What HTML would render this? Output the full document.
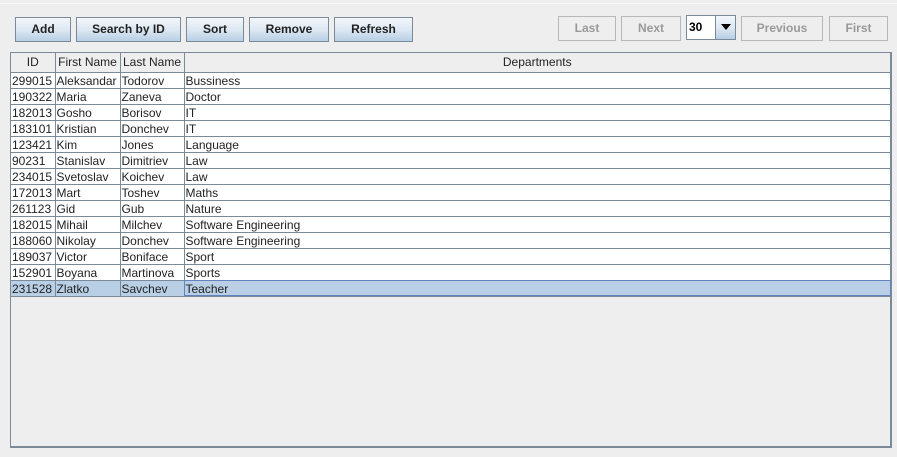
<!DOCTYPE html><html><head><style>
body{margin:0;width:897px;height:457px;background:#eeeeee;font-family:"Liberation Sans",sans-serif;position:relative;overflow:hidden}
.top{position:absolute;left:0;top:0;width:897px;height:3px;background:#eee;border-bottom:1px solid #fafafa}
.b{position:absolute;top:17px;height:25px;box-sizing:border-box;border:1px solid #7a8a99;background:linear-gradient(#f4f7fb,#dde8f3 50%,#b8cfe5);font-weight:bold;font-size:12px;color:#222;text-align:center;line-height:23px}
.d{top:16px;background:#eeeeee;border-color:#b8b8b8;color:#999}
.tbl{position:absolute;left:10px;top:52px;width:882px;height:396px;box-sizing:border-box;border:1px solid #7a8a99;border-right:2px solid #7a8a99;border-bottom:2px solid #7a8a99;background:#eee}
table{border-collapse:collapse;font-size:12px;color:#222;table-layout:fixed;width:880px}
th{font-weight:normal;height:19px;padding:0;border-right:1px solid #7a8a99;border-bottom:1px solid #7a8a99;background:#eee;box-sizing:border-box}
td{height:16px;padding:1px 0 0 1px;border:1px solid #7a8a99;border-top:0;background:#fff;white-space:nowrap;overflow:hidden;line-height:14px;box-sizing:border-box}
td:first-child{border-left:0}
tr.s td{background:#b8cfe5}
</style></head><body>
<div class="top"></div>
<div class="b" style="left:15px;width:56px">Add</div>
<div class="b" style="left:76px;width:105px">Search by ID</div>
<div class="b" style="left:186px;width:58px">Sort</div>
<div class="b" style="left:249px;width:80px">Remove</div>
<div class="b" style="left:334px;width:79px">Refresh</div>
<div class="b d" style="left:558px;width:58px">Last</div>
<div class="b d" style="left:621px;width:60px">Next</div>
<div style="position:absolute;left:686px;top:15px;width:30px;height:25px;box-sizing:border-box;border:1px solid #7a8a99;background:#fff;font-weight:bold;font-size:12px;line-height:22px;padding-left:2px">30</div>
<div class="b" style="left:715px;top:15px;width:21px;height:25px"><svg width="12" height="8" style="margin-top:7px;vertical-align:top"><path d="M1 1h10l-5 6z" fill="#000"/></svg></div>
<div class="b d" style="left:741px;width:82px">Previous</div>
<div class="b d" style="left:829px;width:59px">First</div>
<div class="tbl"><table>
<colgroup><col style="width:44px"><col style="width:65px"><col style="width:64px"><col></colgroup>
<tr><th>ID</th><th>First Name</th><th>Last Name</th><th>Departments</th></tr>
<tr><td>299015</td><td>Aleksandar</td><td>Todorov</td><td>Bussiness</td></tr>
<tr><td>190322</td><td>Maria</td><td>Zaneva</td><td>Doctor</td></tr>
<tr><td>182013</td><td>Gosho</td><td>Borisov</td><td>IT</td></tr>
<tr><td>183101</td><td>Kristian</td><td>Donchev</td><td>IT</td></tr>
<tr><td>123421</td><td>Kim</td><td>Jones</td><td>Language</td></tr>
<tr><td>90231</td><td>Stanislav</td><td>Dimitriev</td><td>Law</td></tr>
<tr><td>234015</td><td>Svetoslav</td><td>Koichev</td><td>Law</td></tr>
<tr><td>172013</td><td>Mart</td><td>Toshev</td><td>Maths</td></tr>
<tr><td>261123</td><td>Gid</td><td>Gub</td><td>Nature</td></tr>
<tr><td>182015</td><td>Mihail</td><td>Milchev</td><td>Software Engineering</td></tr>
<tr><td>188060</td><td>Nikolay</td><td>Donchev</td><td>Software Engineering</td></tr>
<tr><td>189037</td><td>Victor</td><td>Boniface</td><td>Sport</td></tr>
<tr><td>152901</td><td>Boyana</td><td>Martinova</td><td>Sports</td></tr>
<tr class="s"><td>231528</td><td>Zlatko</td><td>Savchev</td><td style="outline:1px solid #6382bf;outline-offset:-1px">Teacher</td></tr>
</table></div>
</body></html>
